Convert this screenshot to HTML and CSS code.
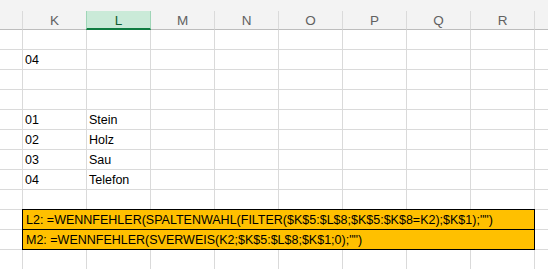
FILE: index.html
```html
<!DOCTYPE html>
<html>
<head>
<meta charset="utf-8">
<title>Tabelle</title>
<link rel="stylesheet" href="styles.css">
</head>
<body>
<div class="sheet">
  <div class="toolbar"></div>

  <div class="hd stub"></div>
  <div class="hd">K</div>
  <div class="hd selected">L</div>
  <div class="hd">M</div>
  <div class="hd">N</div>
  <div class="hd">O</div>
  <div class="hd">P</div>
  <div class="hd">Q</div>
  <div class="hd">R</div>
  <div class="hd rest"></div>

  <div class="c stub"></div><div class="c"></div><div class="c"></div><div class="c"></div><div class="c"></div><div class="c"></div><div class="c"></div><div class="c"></div><div class="c"></div><div class="c rest"></div>
  <div class="c stub"></div><div class="c">04</div><div class="c"></div><div class="c"></div><div class="c"></div><div class="c"></div><div class="c"></div><div class="c"></div><div class="c"></div><div class="c rest"></div>
  <div class="c stub"></div><div class="c"></div><div class="c"></div><div class="c"></div><div class="c"></div><div class="c"></div><div class="c"></div><div class="c"></div><div class="c"></div><div class="c rest"></div>
  <div class="c stub"></div><div class="c"></div><div class="c"></div><div class="c"></div><div class="c"></div><div class="c"></div><div class="c"></div><div class="c"></div><div class="c"></div><div class="c rest"></div>
  <div class="c stub"></div><div class="c">01</div><div class="c">Stein</div><div class="c"></div><div class="c"></div><div class="c"></div><div class="c"></div><div class="c"></div><div class="c"></div><div class="c rest"></div>
  <div class="c stub"></div><div class="c">02</div><div class="c">Holz</div><div class="c"></div><div class="c"></div><div class="c"></div><div class="c"></div><div class="c"></div><div class="c"></div><div class="c rest"></div>
  <div class="c stub"></div><div class="c">03</div><div class="c">Sau</div><div class="c"></div><div class="c"></div><div class="c"></div><div class="c"></div><div class="c"></div><div class="c"></div><div class="c rest"></div>
  <div class="c stub"></div><div class="c">04</div><div class="c">Telefon</div><div class="c"></div><div class="c"></div><div class="c"></div><div class="c"></div><div class="c"></div><div class="c"></div><div class="c rest"></div>
  <div class="c stub"></div><div class="c"></div><div class="c"></div><div class="c"></div><div class="c"></div><div class="c"></div><div class="c"></div><div class="c"></div><div class="c"></div><div class="c rest"></div>

  <div class="c stub"></div>
  <div class="box">
    <div class="line">L2: =WENNFEHLER(SPALTENWAHL(FILTER($K$5:$L$8;$K$5:$K$8=K2);$K$1);"")</div>
    <div class="line">M2: =WENNFEHLER(SVERWEIS(K2;$K$5:$L$8;$K$1;0);"")</div>
  </div>
  <div class="c rest"></div>
  <div class="c stub"></div>
  <div class="c rest"></div>

  <div class="c stub"></div><div class="c"></div><div class="c"></div><div class="c"></div><div class="c"></div><div class="c"></div><div class="c"></div><div class="c"></div><div class="c"></div><div class="c rest"></div>
</div>
</body>
</html>
```

FILE: styles.css
```css
body {
  margin: 0;
  background-color: white;
  font-family: "Liberation Sans", Arial, sans-serif;
  font-size: 12.5px;
  color: #000;
  overflow: hidden;
}

.sheet {
  display: grid;
  grid-template-columns: 23px repeat(8, 64px) 1fr;
  grid-template-rows: 11px 19px repeat(12, 20px);
  width: 548px;
}

.toolbar {
  grid-column: 1 / -1;
  background-color: #f3f3f3;
}

/* column headers */
.hd {
  box-sizing: border-box;
  background-color: #f3f3f3;
  border-right: 1px solid #dadada;
  border-bottom: 1px solid #bdbdbd;
  text-align: center;
  line-height: 19px;
  font-size: 13.5px;
  color: #616161;
}

.hd.selected {
  margin-left: -1px;
  background-color: #caead8;
  border-left: 1px solid #9fd5b7;
  border-right: 1px solid #9fd5b7;
  border-bottom: 2px solid #107c41;
  color: #0e5c2f;
}

.hd.rest {
  border-right: none;
}

/* grid cells */
.c {
  box-sizing: border-box;
  padding-left: 2px;
  border-right: 1px solid #dadada;
  border-bottom: 1px solid #dadada;
  line-height: 21px;
  white-space: nowrap;
  overflow: hidden;
}

.c.rest {
  border-right: none;
}

/* orange block merged over K:R, two rows */
.box {
  grid-column: 2 / 10;
  grid-row: span 2;
  margin: -1px 0 0 -1px;
  background-color: #ffc000;
  border: 1px solid #000;
  position: relative;
}

.line {
  height: 19px;
  padding-left: 3px;
  line-height: 21px;
  white-space: nowrap;
  overflow: hidden;
}

.line + .line {
  border-top: 1px solid #000;
}
```
